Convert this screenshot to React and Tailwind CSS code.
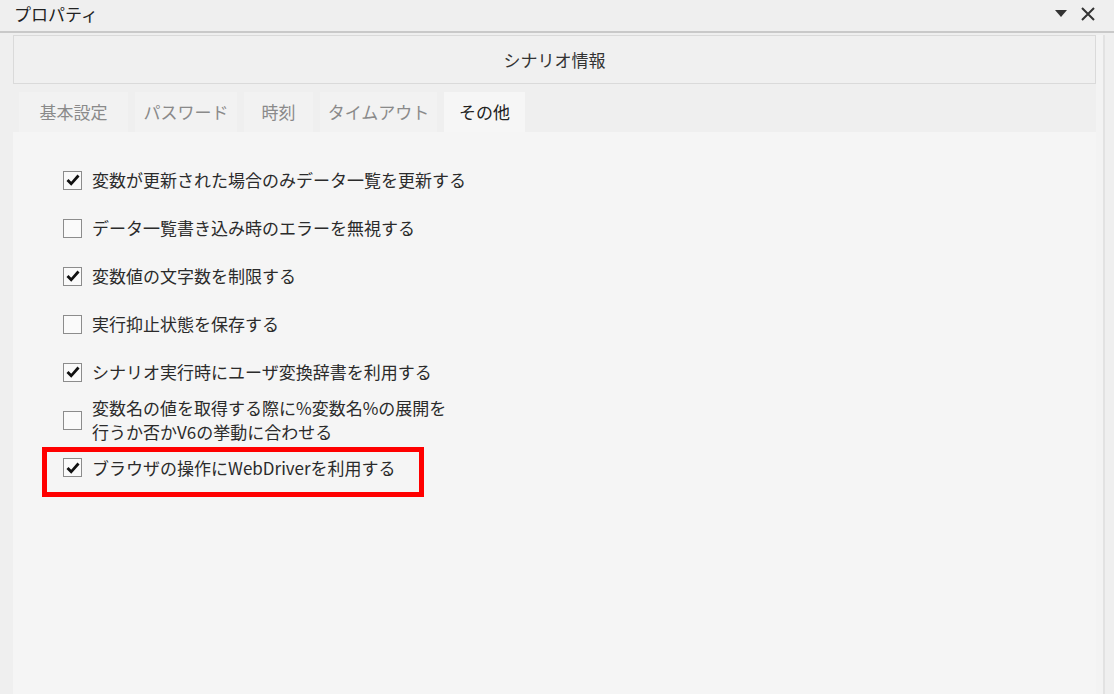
import React from 'react';

const font = { fontFamily: '"Noto Sans CJK JP", "Noto Sans", sans-serif' };

const tabs = [
  { label: '基本設定', w: 'w-[109px]' },
  { label: 'パスワード', w: 'w-[102px]' },
  { label: '時刻', w: 'w-[69px]' },
  { label: 'タイムアウト', w: 'w-[117px]' },
  { label: 'その他', w: 'w-[81px]', active: true },
];

const options = [
  { lines: ['変数が更新された場合のみデータ一覧を更新する'], checked: true },
  { lines: ['データ一覧書き込み時のエラーを無視する'], checked: false },
  { lines: ['変数値の文字数を制限する'], checked: true },
  { lines: ['実行抑止状態を保存する'], checked: false },
  { lines: ['シナリオ実行時にユーザ変換辞書を利用する'], checked: true },
  { lines: ['変数名の値を取得する際に%変数名%の展開を', '行うか否かV6の挙動に合わせる'], checked: false },
];

const CheckBox = ({ checked }) => (
  <div className="w-[19px] h-[19px] shrink-0 border border-[#8c8c8c] bg-[#fafafa] flex items-center justify-center">
    {checked && (
      <svg width="14" height="12" viewBox="0 0 14 12">
        <path d="M1.5 6 L5.2 9.8 L12.5 1.5" fill="none" stroke="#111" strokeWidth="2.8" />
      </svg>
    )}
  </div>
);

const Option = ({ lines, checked }) => (
  <div className="h-[48px] flex items-center gap-[10px]">
    <CheckBox checked={checked} />
    <div className="text-[17px] leading-[24px] text-[#2b2b2b]">
      {lines.map((l) => (
        <div key={l}>{l}</div>
      ))}
    </div>
  </div>
);

export default function App() {
  return (
    <div className="w-[1114px] h-[694px] bg-[#efefef] flex flex-col overflow-hidden" style={font}>
      {/* Title bar */}
      <div className="h-[33px] shrink-0 border-b-2 border-[#c9c9c9] flex items-center justify-between pl-[14px] pr-[19px]">
        <span className="text-[17px] text-[#222] -mt-[4px]">プロパティ</span>
        <div className="flex items-center gap-[14px] -mt-[4px]">
          <svg width="12" height="7" viewBox="0 0 12 7">
            <path d="M0 0 H12 L6 7 Z" fill="#333" />
          </svg>
          <svg width="14" height="14" viewBox="0 0 14 14">
            <path d="M1 1 L13 13 M13 1 L1 13" stroke="#333" strokeWidth="2" />
          </svg>
        </div>
      </div>

      <div className="flex-1 flex pl-[13px] pt-[2px]">
        <div className="w-[1083px] flex flex-col">
          {/* Header box */}
          <div className="h-[49px] border border-[#dadada] bg-[#f0f0f0] flex items-center justify-center text-[17px] text-[#333]">
            シナリオ情報
          </div>

          {/* Tabs */}
          <div className="mt-[8px] h-[40px] flex gap-[7px] pl-[6px]">
            {tabs.map((t) => (
              <div
                key={t.label}
                className={`${t.w} h-full flex items-center justify-center text-[17px] ${
                  t.active ? 'bg-[#f6f6f6] text-[#222]' : 'bg-[#f2f2f2] text-[#8a8a8a]'
                }`}
              >
                {t.label}
              </div>
            ))}
          </div>

          {/* Content */}
          <div className="flex-1 bg-[#f5f5f5] pl-[50px] pt-[24px] flex flex-col">
            {options.map((o) => (
              <Option key={o.lines[0]} {...o} />
            ))}
            <div className="mt-[3px] -ml-[21px] w-[382px] h-[50px] border-[5px] border-[#ff0000] pl-[16px] pb-[9px] flex items-center gap-[10px]">
              <CheckBox checked />
              <span className="text-[17px] text-[#2b2b2b]">ブラウザの操作にWebDriverを利用する</span>
            </div>
          </div>
        </div>
        <div className="w-[7px] bg-[#f3f3f3]" />
        <div className="w-[2px] bg-[#e2e2e2]" />
      </div>
    </div>
  );
}
